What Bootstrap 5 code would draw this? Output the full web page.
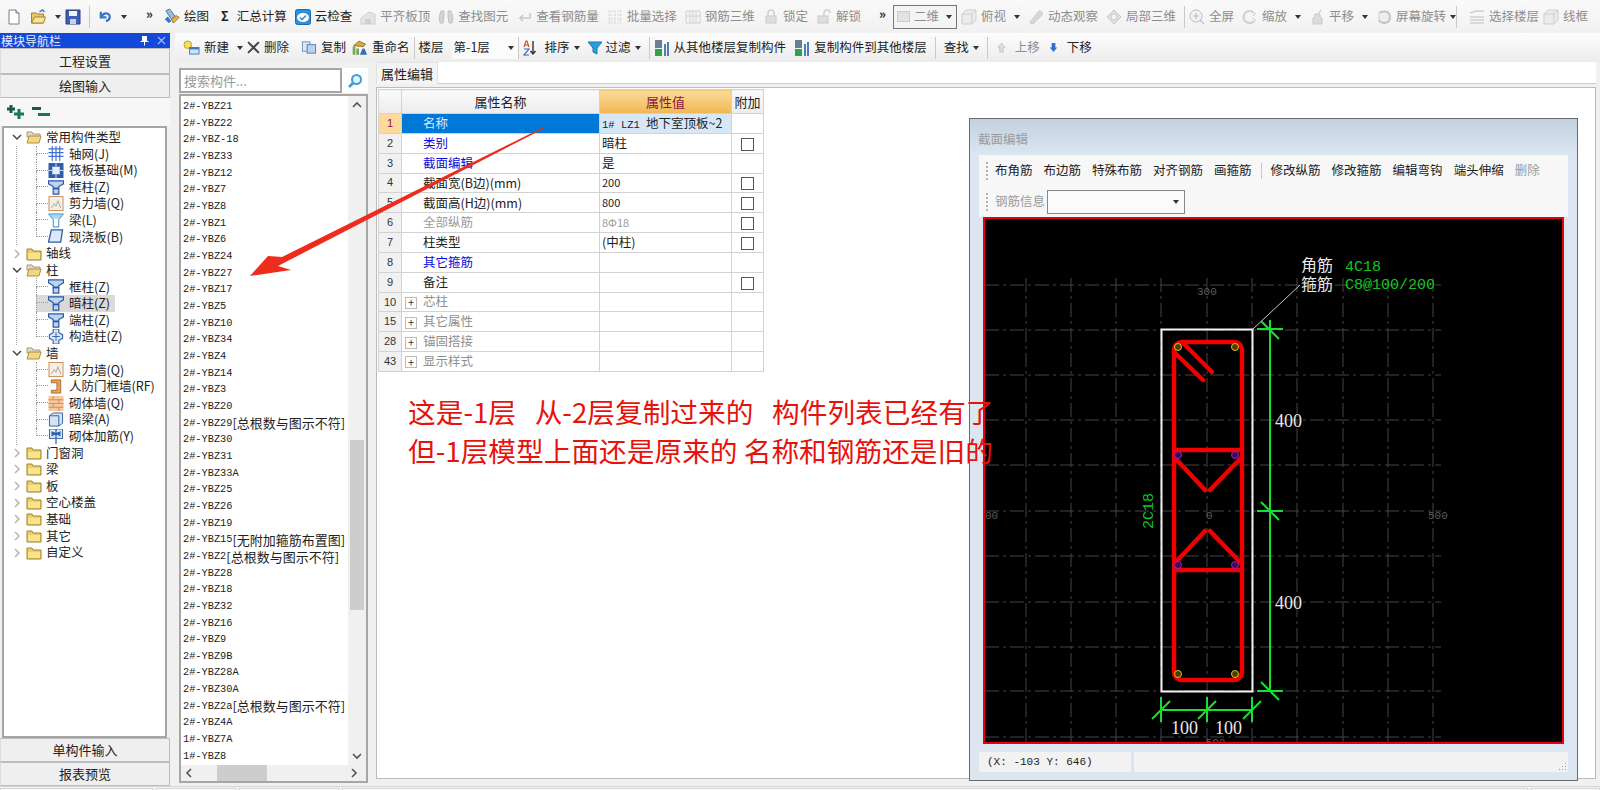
<!DOCTYPE html>
<html lang="zh-CN">
<head>
  <meta charset="UTF-8">
  <title>钢筋算量</title>
  <link href="https://cdn.jsdelivr.net/npm/bootstrap@5.3.3/dist/css/bootstrap.min.css" rel="stylesheet">
  <style>
    html, body { height: 790px; overflow: hidden; }
    body {
      width: 1600px;
      background: #f0f0f0;
      color: #222;
      font-family: "Noto Sans CJK SC", "Liberation Sans", sans-serif;
      font-size: 12.5px;
      line-height: 1;
      position: relative;
    }
    svg { flex: none; display: block; }
    .mono { font-family: "Liberation Mono", "Noto Sans CJK SC", monospace; }

    /* toolbars */
    .top-bar { height: 33px; padding-left: 6px; background: linear-gradient(#fafafa, #f1f1f1); white-space: nowrap; }
    .tool { display: inline-flex; align-items: center; gap: 4px; margin-right: 8px; }
    .tool.off { color: #8d8d8d; }
    .caret-down { width: 0; height: 0; border: 3px solid transparent; border-top: 4px solid #333; border-bottom: 0; flex: none; }
    .tool-sep { width: 1px; height: 22px; background: #c9c9c9; flex: none; }
    .more { font-size: 13px; font-weight: 700; width: 17px; margin-left: 11px; margin-top: -6px; }
    .more-b { width: 14px; margin-left: 10px; }
    .view-box { width: 64px; height: 24px; border: 1px solid #777; background: #f4f4f4; color: #8d8d8d; gap: 4px; padding-left: 3px; }
    .view-glyph { width: 13px; height: 11px; background: #e2e2e2; border: 1px solid #ccc; }
    .sub-bar { height: 29px; margin-left: 5px; padding-left: 8px; background: linear-gradient(#fdfdfd, #ececec); white-space: nowrap; }
    .floor-select { width: 66px; height: 22px; background: #fbfbfb; padding: 0 4px 0 2px; }

    /* left navigation */
    .nav-col { width: 170px; flex: none; }
    .nav-head { height: 15px; background: #1249d8; color: #e8eeff; font-size: 12px; padding: 0 4px 0 1px; }
    .pane-btn { background: #efefef; border: 1px solid #bdbdbd; border-left-color: #ddd; text-align: center; font-size: 13px; }
    .pane-btn.h-a { height: 26px; line-height: 24px; }
    .pane-btn.h-b { height: 24px; line-height: 22px; }
    .pane-btn.h-c { height: 24px; line-height: 22px; }
    .tree-tools { height: 28px; background: #f7f7f7; padding-left: 7px; gap: 7px; }
    .tree-box { height: 612px; margin: 0 3px 0 2px; background: #fff; border: 2px solid #a6a6a6; padding-top: 1px; overflow: hidden; }
    .tree-row { height: 16.62px; display: flex; align-items: center; font-size: 12.5px; white-space: nowrap; }
    .tree-top { gap: 4px; padding-left: 8px; }
    .tree-sub { margin-left: 12px; border-left: 1px dotted #aaa; padding-left: 19px; }
    .tree-kid { position: relative; padding-left: 12px; gap: 5px; }
    .tree-kid::before { content: ""; position: absolute; left: 0; top: 0; height: 50%; width: 12px; border-left: 1px dotted #999; border-bottom: 1px dotted #999; }
    .tree-kid:not(:last-child)::after { content: ""; position: absolute; left: 0; top: 50%; bottom: 0; border-left: 1px dotted #999; }
    .tree-sel { background: #dadada; margin-right: 50px; }

    /* component list */
    .right-col { min-width: 0; }
    .main-row { height: 721px; }
    .list-col { width: 198px; flex: none; padding: 6px 0 0 9px; }
    .search-line { height: 26px; }
    .search-input { width: 163px; height: 25px; border: 2px solid #a6a6a6; border-radius: 0; padding: 0 3px; font-size: 13px; color: #999; background: #fff; display: flex; align-items: center; }
    .search-go { flex: 1; background: #fff; height: 25px; }
    .list-box { height: 689px; width: 189px; border: 2px solid #a6a6a6; background: #fff; }
    .list-rows { height: 669px; padding-top: 2px; width: 167px; }
    .list-item { height: 16.67px; display: flex; align-items: center; padding-left: 2px; font-size: 10.3px; white-space: nowrap; color: #222; }
    .list-item b { font-weight: 400; font-size: 13px; font-family: "Noto Sans CJK SC", sans-serif; }
    .vbar { width: 18px; background: #f0f0f0; }
    .vbar-arrow { height: 18px; }
    .vbar-up { height: 326px; }
    .vbar-thumb { height: 170px; background: #cdcdcd; margin: 0 2px; }
    .hbar { height: 16px; background: #f0f0f0; padding: 0 4px; }
    .hbar-left { width: 24px; }
    .hbar-thumb { width: 50px; height: 16px; background: #cdcdcd; }

    /* properties */
    .prop-col { min-width: 0; margin-left: 8px; margin-right: 4px; }
    .tab-line { height: 22px; background: #fff; border-bottom: 1px solid #cfcfcf; }
    .prop-tab { width: 62px; height: 22px; background: #f4f4f4; font-size: 13px; text-align: center; line-height: 21px; border: 1px solid #e2e2e2; border-bottom: 0; }
    .prop-gap { height: 3px; }
    .prop-panel { height: 692px; background: #fff; border: 1px solid #bcbcbc; padding: 1px; }
    .prop-table { width: 385px; table-layout: fixed; margin: 0; --bs-table-border-color: #d2d2d2; }
    .c-no { width: 23px; } .c-name { width: 198px; } .c-val { width: 132px; } .c-add { width: 32px; }
    .prop-table th, .prop-table td { padding: 0; height: 19.85px; vertical-align: middle; font-weight: 400; background: #fff; color: #222; box-shadow: none; white-space: nowrap; overflow: hidden; }
    .prop-table thead th { height: 24px; text-align: center; font-size: 13px; background: linear-gradient(#fafafa, #ececec); }
    .prop-table thead th.val-head { background: linear-gradient(#fbdc9c, #f1b653); color: #8a1538; }
    .prop-table .no-cell { text-align: center; background: #f1f1f1; font-size: 11px; color: #333; font-family: "Liberation Sans", sans-serif; }
    .prop-table .no-cell.on { background: #fdd99b; color: #8a1538; }
    .prop-table .name-cell { padding-left: 21px; font-size: 12.5px; }
    .prop-table .name-cell.on { background: #0078d7; color: #d8ecff; }
    .prop-table .name-cell.link { color: #0a0ae0; }
    .prop-table .name-cell.dim, .prop-table .val-cell.dim { color: #9a9a9a; }
    .prop-table .group-cell { padding-left: 3px; color: #8f8f8f; }
    .prop-table .val-cell { padding-left: 2px; font-size: 12.5px; }
    .prop-table .val-cell.on { background: #d6e8f8; }
    .prop-table .chk-cell { text-align: center; }
    .val-latin { font-size: 10.5px; white-space: pre; }
    .prop-table .val-num { font-size: 11px; }
    .prop-check { width: 13px; height: 13px; margin: 2px 0 0 0; border: 1px solid #555; border-radius: 0 !important; }
    .plus-box { width: 12px; height: 12px; border: 1px solid #bbb; display: inline-flex; align-items: center; justify-content: center; color: #333; font-size: 11px; margin-right: 6px; vertical-align: middle; }

    /* things lying on top of the panel */
    .note-text { position: absolute; left: 408px; top: 392px; color: #e8120c; font-size: 27.7px; line-height: 39px; white-space: pre; }
    .arrow-layer { position: absolute; left: 0; top: 0; pointer-events: none; }

    /* section editor window */
    .section-win { position: absolute; left: 969px; top: 118px; width: 609px; height: 663px; background: #dbe6f1; border: 1px solid #6b6b6b; padding: 0 9px; }
    .win-title { height: 36px; margin: 0 -9px; padding: 5px 0 0 8px; color: #9a9a9a; font-size: 12.5px; background: linear-gradient(#c2d1df, #dbe6f1); display: flex; align-items: center; }
    .win-tools { background: #f7f7f7; height: 62px; padding: 0 4px; }
    .win-row { height: 31px; gap: 11px; padding-left: 12px; position: relative; }
    .win-row::before { content: ""; position: absolute; left: 3px; top: 7px; bottom: 6px; border-left: 2px dotted #b4b4b4; }
    .win-combo { width: 138px; height: 24px; border: 1px solid #888; background: #fbfbfb; margin-left: -9px; padding-right: 5px; }
    .win-row .off { color: #9a9a9a; }
    .win-sep { width: 1px; height: 16px; background: #c9c9c9; margin: 0 -2px; }
    .win-canvas { margin: 0 4px; border: 2px solid #e8000a; background: #000; height: 527px; overflow: hidden; }
    .win-status { height: 22px; margin-top: 8px; gap: 3px; }
    .status-cell { background: #f2f2f2; height: 20px; display: flex; align-items: center; padding-left: 8px; font-size: 11px; }
    .status-a { width: 152px; }
    .status-b { flex: 1; }
    .grip { margin-left: auto; margin-right: 1px; align-self: flex-end; }

    .bottom-strip { height: 7px; gap: 3px; border-top: 1px solid #d5d5d5; padding-top: 1px; }
    .bottom-strip span { background: #f9f9f9; border: 1px solid #d8d8d8; border-bottom: 0; }
    .tab-a { width: 153px; } .tab-b { width: 80px; } .tab-c { width: 100px; } .tab-d { width: 1186px; } .tab-e { flex: 1; }

    .cad-mono { font-family: "Liberation Mono", monospace; }
    .cad-serif { font-family: "Liberation Serif", serif; }
  </style>
</head>
<body>

<svg width="0" height="0" class="position-absolute">
  <defs>
    <symbol id="i-doc" viewBox="0 0 16 16"><path d="M3 1h7l3 3v11H3z" fill="#fff" stroke="#6d7f95"/><path d="M10 1v3h3" fill="#dfe6ee" stroke="#6d7f95"/></symbol>
    <symbol id="i-open" viewBox="0 0 16 16"><path d="M1 4h5l1 1h6v9H1z" fill="#e8c66a" stroke="#a5822c"/><path d="M1 14l3-6h11l-2 6z" fill="#f8e39a" stroke="#a5822c"/><path d="M9 3l3-2 2 2" fill="none" stroke="#3a78c4" stroke-width="1.4"/></symbol>
    <symbol id="i-save" viewBox="0 0 16 16"><path d="M1 1h14v14H1z" fill="#3d5fb5" stroke="#283f80"/><path d="M4 2h8v5H4z" fill="#f3f3f3"/><path d="M5 10h6v5H5z" fill="#c9d3e6"/></symbol>
    <symbol id="i-undo" viewBox="0 0 16 16"><path d="M3 3v6h6" fill="none" stroke="#3a78c4" stroke-width="2.4"/><path d="M3.5 8.5C6 3 13 3.5 12.500 9c-.2 2-2 3.500-4 4" fill="none" stroke="#3a78c4" stroke-width="2.4"/></symbol>
    <symbol id="i-draw" viewBox="0 0 18 18"><path d="M3 3l4-2 6 8-4 3z" fill="#9db9dd" stroke="#50739f"/><path d="M9 12l5-4 3 2-6 6z" fill="#e9b04f" stroke="#9c6f1e"/><path d="M2 12l3-3 4 5-3 2z" fill="#3c74c4"/></symbol>
    <symbol id="i-cloud" viewBox="0 0 16 16"><rect x=".5" y=".5" width="15" height="15" rx="2" fill="#2f8fd8" stroke="#1a6cad"/><ellipse cx="8" cy="8.5" rx="6" ry="4.5" fill="#fff"/><path d="M5 8.5l2 2 4-4" fill="none" stroke="#2f8fd8" stroke-width="1.6"/></symbol>
    <symbol id="i-g-roof" viewBox="0 0 16 16"><path d="M1 15V9l8-6 6 2v10z" fill="#e4e4e4" stroke="#cfcfcf"/><path d="M5 10h6v5H5z" fill="#d0d0d0"/></symbol>
    <symbol id="i-g-find" viewBox="0 0 16 16"><path d="M1 8l2-6h3v5l-1 7H2zM15 8l-2-6h-3v5l1 7h3z" fill="#d4d4d4" stroke="#c4c4c4"/></symbol>
    <symbol id="i-g-back" viewBox="0 0 16 16"><path d="M14 4v5H5M7 6L4 9l3 3" fill="none" stroke="#c9c9c9" stroke-width="1.6"/></symbol>
    <symbol id="i-g-batch" viewBox="0 0 16 16"><path d="M1 2h14M1 6h14M1 10h14M1 14h14M3 2v12M8 2v12M13 2v12" stroke="#d8d8d8" fill="none" stroke-dasharray="2 1"/></symbol>
    <symbol id="i-g-rebar" viewBox="0 0 16 16"><path d="M1 2h14v12H1zM5 2v12M8 2v12M11 2v12M1 7h14" fill="none" stroke="#d0d0d0"/></symbol>
    <symbol id="i-g-lock" viewBox="0 0 16 16"><path d="M5 7V4a3 3 0 016 0v3" fill="none" stroke="#cfcfcf" stroke-width="1.4"/><rect x="3" y="7" width="10" height="7" fill="#dedede" stroke="#cacaca"/></symbol>
    <symbol id="i-g-unlock" viewBox="0 0 16 16"><path d="M8 7V4a3 3 0 016 0" fill="none" stroke="#cfcfcf" stroke-width="1.4"/><rect x="2" y="7" width="10" height="7" fill="#dedede" stroke="#cacaca"/></symbol>
    <symbol id="i-g-cube" viewBox="0 0 16 16"><path d="M1 5l4-4h10v10l-4 4H1zM1 5h10v10M11 5l4-4" fill="#ececec" stroke="#cdcdcd"/></symbol>
    <symbol id="i-g-orbit" viewBox="0 0 16 16"><path d="M2 13L11 2c3 0 4 2 3 4L5 15c-2 0-3-1-3-2z" fill="#d8d8d8" stroke="#cacaca"/></symbol>
    <symbol id="i-g-part" viewBox="0 0 16 16"><path d="M8 1l7 7-7 7-7-7z" fill="#e0e0e0" stroke="#c8c8c8"/><circle cx="8" cy="8" r="3" fill="#f4f4f4" stroke="#c8c8c8"/></symbol>
    <symbol id="i-g-full" viewBox="0 0 16 16"><circle cx="7" cy="7" r="6" fill="#f2f2f2" stroke="#bdbdbd"/><path d="M4 7h6M7 4v6M11 11l4 4" stroke="#bdbdbd" fill="none" stroke-width="1.2"/></symbol>
    <symbol id="i-g-zoom" viewBox="0 0 16 16"><path d="M12 4a6 6 0 100 8" fill="none" stroke="#cfcfcf" stroke-width="2"/><path d="M11 7l3-3M11 9l3 3" stroke="#c4c4c4"/></symbol>
    <symbol id="i-g-pan" viewBox="0 0 16 16"><path d="M4 15V9l2-1V5h5v3l2 1v6z" fill="#dcdcdc" stroke="#c9c9c9"/><path d="M10 4l2-3" stroke="#bbb"/></symbol>
    <symbol id="i-g-rot" viewBox="0 0 16 16"><path d="M3 3h10v10H3z" fill="#eee" stroke="#d0d0d0"/><path d="M3 11a6 6 0 1 0 1-7" fill="none" stroke="#bdbdbd" stroke-width="1.4"/></symbol>
    <symbol id="i-g-floors" viewBox="0 0 16 16"><path d="M1 4l6-2h8M1 8h14M1 11h14M1 14h14" stroke="#cfcfcf" fill="none" stroke-width="1.6"/></symbol>
    <symbol id="i-new" viewBox="0 0 18 16"><circle cx="5" cy="5" r="4" fill="#f4df64" stroke="#b89a1e"/><rect x="7" y="8" width="10" height="7" fill="#cfe1f4" stroke="#3e79c0"/><rect x="7" y="8" width="10" height="2" fill="#3e79c0"/></symbol>
    <symbol id="i-x" viewBox="0 0 12 12"><path d="M1 1l10 10M11 1L1 11" stroke="#444" stroke-width="1.8"/></symbol>
    <symbol id="i-copy" viewBox="0 0 16 16"><rect x="1" y="2" width="8" height="10" fill="#dbe7f5" stroke="#6f93bd"/><rect x="6" y="5" width="9" height="9" fill="#bdd3ec" stroke="#4f7fb5"/></symbol>
    <symbol id="i-rename" viewBox="0 0 20 18"><path d="M4 7l6-5 7 3-2 3z" fill="#d9a93e" stroke="#8f6c1c"/><path d="M3 8h3v9H3zM7 10h3v7H7z" fill="#77a65a"/><path d="M11 17l3-7h2l3 7z" fill="#3a69b5"/></symbol>
    <symbol id="i-sort" viewBox="0 0 14 16"><path d="M1 7l2-6h1l2 6M2 5h3" fill="none" stroke="#d0491f" stroke-width="1.1"/><path d="M1 9h5L1 15h5" fill="none" stroke="#2e62b5" stroke-width="1.1"/><path d="M10 1v13M7.500 11l2.500 3 2.500-3" fill="none" stroke="#333" stroke-width="1.4"/></symbol>
    <symbol id="i-filter" viewBox="0 0 14 14"><path d="M0 1h14L9 7v6l-4-2V7z" fill="#2b9ce0" stroke="#1a79b5"/></symbol>
    <symbol id="i-copy-in" viewBox="0 0 16 18"><rect x="1" y="1" width="7" height="8" fill="#6b7e96"/><rect x="1" y="10" width="7" height="7" fill="#33a14a"/><path d="M10 5h2v12h-2zM13 3h2v14h-2z" fill="#4f7fb5"/></symbol>
    <symbol id="i-up" viewBox="0 0 12 12"><path d="M6 1l4 5H8v5H4V6H2z" fill="#dcdcdc" stroke="#c9c9c9"/></symbol>
    <symbol id="i-down" viewBox="0 0 12 12"><path d="M6 11l4-5H8V1H4v5H2z" fill="#2e6fcf"/></symbol>
    <symbol id="i-plus2" viewBox="0 0 18 14"><path d="M2.500 0h3v2.500H8v3H5.500V8h-3V5.500H0v-3h2.500z" fill="#1d5c3e"/><path d="M10.500 4h3v3.500H17v3h-3.500V14h-3v-3.500H7v-3h3.500z" fill="#157a50"/></symbol>
    <symbol id="i-minus2" viewBox="0 0 18 14"><path d="M0 2h9v3H0z" fill="#1d5c3e"/><path d="M6 8h12v3H6z" fill="#157a50"/></symbol>
    <symbol id="i-search" viewBox="0 0 16 16"><circle cx="9.500" cy="6.500" r="4.500" fill="#e6f4fd" stroke="#3c9ddb" stroke-width="2"/><path d="M6 10l-4 4" stroke="#3c9ddb" stroke-width="2.600"/></symbol>
    <symbol id="i-folder" viewBox="0 0 16 14"><path d="M1 2h5l1 2h8v9H1z" fill="#f0cf62" stroke="#9c8230"/><path d="M2 6h12v6H2z" fill="#f8e38e"/></symbol>
    <symbol id="i-folder-open" viewBox="0 0 16 14"><path d="M1 2h5l1 2h7v3H1z" fill="#e2dcc7" stroke="#a39b7e"/><path d="M1 13l2-7h12l-2 7z" fill="#f4d682" stroke="#a89048"/></symbol>
    <symbol id="i-chev-d" viewBox="0 0 10 10"><path d="M1 3l4 4 4-4" fill="none" stroke="#444" stroke-width="1.500"/></symbol>
    <symbol id="i-chev-r" viewBox="0 0 10 10"><path d="M3 1l4 4-4 4" fill="none" stroke="#b5b5b5" stroke-width="1.500"/></symbol>
    <symbol id="t-grid" viewBox="0 0 16 16"><path d="M0 3h16M0 7h16M0 11h16M4 0v16M8 0v16M12 0v16" stroke="#3f6fd0" fill="none" stroke-width="1.200"/></symbol>
    <symbol id="t-raft" viewBox="0 0 16 16"><rect x="0" y="0" width="16" height="16" fill="#2f5fa8"/><rect x="4" y="4" width="8" height="8" fill="#e5eefb"/><path d="M0 8h4M12 8h4M8 0v4M8 12v4" stroke="#cfe0f7"/></symbol>
    <symbol id="t-col" viewBox="0 0 16 16"><path d="M0 1h16v3L11 7v8H5V7L0 4z" fill="#bcd4f0" stroke="#2a58a8" stroke-width="1.300"/><path d="M5 8h6v2H5z" fill="#2a58a8"/></symbol>
    <symbol id="t-wall" viewBox="0 0 16 16"><rect x=".5" y=".5" width="15" height="15" fill="#f5efe6" stroke="#c98d58"/><path d="M3 13l3-5 2 3 2-6 3 8" stroke="#a9a9a9" fill="none"/></symbol>
    <symbol id="t-beam" viewBox="0 0 16 16"><path d="M0 1h16L11 7v8H5V7z" fill="#a9d4f2" stroke="#4d93cc"/><path d="M6 6h4v8H6z" fill="#fff"/></symbol>
    <symbol id="t-slab" viewBox="0 0 16 16"><path d="M3 1h12l-2 13H0z" fill="#dbe8f8" stroke="#2f5fa8" stroke-width="1.400"/></symbol>
    <symbol id="t-star" viewBox="0 0 16 16"><path d="M5 0h6v4l4 2v4l-4 2v4H5v-4l-4-2V6l4-2z" fill="#dbe8f8" stroke="#2f5fa8" stroke-width="1.200"/><path d="M8 3v10M4 8h8" stroke="#2f5fa8"/></symbol>
    <symbol id="t-door" viewBox="0 0 16 16"><path d="M3 1h10v14H3V12h6V4H3z" fill="#e9a45f" stroke="#a96628"/></symbol>
    <symbol id="t-brick" viewBox="0 0 16 16"><rect width="16" height="16" fill="#f4c8a0"/><path d="M0 4h16M0 8h16M0 12h16M5 0v4M11 4v4M5 8v4M11 12v4" stroke="#d98a4d"/></symbol>
    <symbol id="t-box" viewBox="0 0 16 16"><path d="M1 4l4-3h10v11l-4 3H1z" fill="#d4e3f5" stroke="#2f5fa8"/><path d="M1 4h10v11" fill="none" stroke="#2f5fa8"/></symbol>
    <symbol id="t-bar" viewBox="0 0 16 16"><rect x="1" y="0" width="14" height="10" fill="#dce9f8" stroke="#2f5fa8"/><path d="M8 0v16M3 5h10M3 3l10 4M13 3L3 7" stroke="#2f5fa8" stroke-width="1.300"/></symbol>
  </defs>
</svg>

<div class="top-bar d-flex align-items-center">
  <span class="tool"><svg width="16" height="16"><use href="#i-doc"/></svg></span>
  <span class="tool me-1"><svg width="17" height="16"><use href="#i-open"/></svg><i class="caret-down ms-1"></i></span>
  <span class="tool"><svg width="16" height="16"><use href="#i-save"/></svg></span>
  <i class="tool-sep me-2"></i>
  <span class="tool"><svg width="15" height="15"><use href="#i-undo"/></svg><i class="caret-down ms-1"></i></span>
  <span class="more">»</span>
  <span class="tool"><svg width="17" height="17"><use href="#i-draw"/></svg>绘图</span>
  <span class="tool ms-1"><b>Σ</b><span class="ms-1">汇总计算</span></span>
  <span class="tool"><svg width="16" height="16"><use href="#i-cloud"/></svg>云检查</span>
  <span class="tool off"><svg width="16" height="16"><use href="#i-g-roof"/></svg>平齐板顶</span>
  <span class="tool off"><svg width="16" height="16"><use href="#i-g-find"/></svg>查找图元</span>
  <span class="tool off"><svg width="16" height="16"><use href="#i-g-back"/></svg>查看钢筋量</span>
  <span class="tool off"><svg width="16" height="16"><use href="#i-g-batch"/></svg>批量选择</span>
  <span class="tool off"><svg width="16" height="16"><use href="#i-g-rebar"/></svg>钢筋三维</span>
  <span class="tool off"><svg width="16" height="16"><use href="#i-g-lock"/></svg>锁定</span>
  <span class="tool off"><svg width="16" height="16"><use href="#i-g-unlock"/></svg>解锁</span>
  <span class="more more-b">»</span>
  <span class="view-box d-flex align-items-center me-1"><i class="view-glyph"></i>二维<i class="caret-down ms-auto me-1"></i></span>
  <span class="tool off"><svg width="16" height="16"><use href="#i-g-cube"/></svg>俯视<i class="caret-down ms-1"></i></span>
  <span class="tool off"><svg width="16" height="16"><use href="#i-g-orbit"/></svg>动态观察</span>
  <span class="tool off"><svg width="16" height="16"><use href="#i-g-part"/></svg>局部三维</span>
  <i class="tool-sep"></i>
  <span class="tool off ms-1"><svg width="16" height="16"><use href="#i-g-full"/></svg>全屏</span>
  <span class="tool off"><svg width="16" height="16"><use href="#i-g-zoom"/></svg>缩放<i class="caret-down ms-1"></i></span>
  <span class="tool off"><svg width="16" height="16"><use href="#i-g-pan"/></svg>平移<i class="caret-down ms-1"></i></span>
  <span class="tool off me-0"><svg width="16" height="16"><use href="#i-g-rot"/></svg>屏幕旋转<i class="caret-down"></i></span>
  <i class="tool-sep me-2"></i>
  <span class="tool off ms-1 me-1"><svg width="16" height="16"><use href="#i-g-floors"/></svg>选择楼层</span>
  <span class="tool off me-0"><svg width="16" height="16"><use href="#i-g-cube"/></svg>线框</span>
</div>

<div class="d-flex">
  <div class="nav-col">
    <div class="nav-head d-flex align-items-center justify-content-between">
      <span>模块导航栏</span>
      <span class="d-flex align-items-center gap-2">
        <svg width="9" height="11" viewBox="0 0 9 11"><path d="M2 1h5v5h1.500v1H5v3.500H4V7H.5V6H2z" fill="#fff"/></svg>
        <svg width="9" height="9" viewBox="0 0 9 9"><path d="M1 1l7 7M8 1L1 8" stroke="#9fb6f0" stroke-width="1.200"/></svg>
      </span>
    </div>
    <div class="pane-btn h-a">工程设置</div>
    <div class="pane-btn h-b">绘图输入</div>
    <div class="tree-tools d-flex align-items-center">
      <svg width="18" height="14"><use href="#i-plus2"/></svg>
      <svg width="18" height="14"><use href="#i-minus2"/></svg>
    </div>
    <div class="tree-box">
      <div class="tree-row tree-top"><svg width="10" height="10"><use href="#i-chev-d"/></svg><svg width="16" height="14"><use href="#i-folder-open"/></svg><span>常用构件类型</span></div>
      <div class="tree-sub">
        <div class="tree-row tree-kid"><svg width="16" height="15"><use href="#t-grid"/></svg>轴网(J)</div>
        <div class="tree-row tree-kid"><svg width="16" height="15"><use href="#t-raft"/></svg>筏板基础(M)</div>
        <div class="tree-row tree-kid"><svg width="16" height="15"><use href="#t-col"/></svg>框柱(Z)</div>
        <div class="tree-row tree-kid"><svg width="16" height="15"><use href="#t-wall"/></svg>剪力墙(Q)</div>
        <div class="tree-row tree-kid"><svg width="16" height="15"><use href="#t-beam"/></svg>梁(L)</div>
        <div class="tree-row tree-kid"><svg width="16" height="15"><use href="#t-slab"/></svg>现浇板(B)</div>
      </div>
      <div class="tree-row tree-top"><svg width="10" height="10"><use href="#i-chev-r"/></svg><svg width="16" height="14"><use href="#i-folder"/></svg><span>轴线</span></div>
      <div class="tree-row tree-top"><svg width="10" height="10"><use href="#i-chev-d"/></svg><svg width="16" height="14"><use href="#i-folder-open"/></svg><span>柱</span></div>
      <div class="tree-sub">
        <div class="tree-row tree-kid"><svg width="16" height="15"><use href="#t-col"/></svg>框柱(Z)</div>
        <div class="tree-row tree-kid tree-sel"><svg width="16" height="15"><use href="#t-col"/></svg>暗柱(Z)</div>
        <div class="tree-row tree-kid"><svg width="16" height="15"><use href="#t-col"/></svg>端柱(Z)</div>
        <div class="tree-row tree-kid"><svg width="16" height="15"><use href="#t-star"/></svg>构造柱(Z)</div>
      </div>
      <div class="tree-row tree-top"><svg width="10" height="10"><use href="#i-chev-d"/></svg><svg width="16" height="14"><use href="#i-folder-open"/></svg><span>墙</span></div>
      <div class="tree-sub">
        <div class="tree-row tree-kid"><svg width="16" height="15"><use href="#t-wall"/></svg>剪力墙(Q)</div>
        <div class="tree-row tree-kid"><svg width="16" height="15"><use href="#t-door"/></svg>人防门框墙(RF)</div>
        <div class="tree-row tree-kid"><svg width="16" height="15"><use href="#t-brick"/></svg>砌体墙(Q)</div>
        <div class="tree-row tree-kid"><svg width="16" height="15"><use href="#t-box"/></svg>暗梁(A)</div>
        <div class="tree-row tree-kid"><svg width="16" height="15"><use href="#t-bar"/></svg>砌体加筋(Y)</div>
      </div>
      <div class="tree-row tree-top"><svg width="10" height="10"><use href="#i-chev-r"/></svg><svg width="16" height="14"><use href="#i-folder"/></svg><span>门窗洞</span></div>
      <div class="tree-row tree-top"><svg width="10" height="10"><use href="#i-chev-r"/></svg><svg width="16" height="14"><use href="#i-folder"/></svg><span>梁</span></div>
      <div class="tree-row tree-top"><svg width="10" height="10"><use href="#i-chev-r"/></svg><svg width="16" height="14"><use href="#i-folder"/></svg><span>板</span></div>
      <div class="tree-row tree-top"><svg width="10" height="10"><use href="#i-chev-r"/></svg><svg width="16" height="14"><use href="#i-folder"/></svg><span>空心楼盖</span></div>
      <div class="tree-row tree-top"><svg width="10" height="10"><use href="#i-chev-r"/></svg><svg width="16" height="14"><use href="#i-folder"/></svg><span>基础</span></div>
      <div class="tree-row tree-top"><svg width="10" height="10"><use href="#i-chev-r"/></svg><svg width="16" height="14"><use href="#i-folder"/></svg><span>其它</span></div>
      <div class="tree-row tree-top"><svg width="10" height="10"><use href="#i-chev-r"/></svg><svg width="16" height="14"><use href="#i-folder"/></svg><span>自定义</span></div>
    </div>
    <div class="pane-btn h-c">单构件输入</div>
    <div class="pane-btn h-c">报表预览</div>
  </div>

  <div class="flex-grow-1 right-col">
    <div class="sub-bar d-flex align-items-center">
      <span class="tool me-1"><svg width="17" height="15"><use href="#i-new"/></svg>新建<i class="caret-down ms-1"></i></span>
      <span class="tool"><svg width="13" height="13"><use href="#i-x"/></svg><span>删除</span></span>
      <span class="tool ms-1 me-1"><svg width="16" height="15"><use href="#i-copy"/></svg>复制</span>
      <span class="tool me-1"><svg width="18" height="17"><use href="#i-rename"/></svg>重命名</span>
      <i class="tool-sep me-1"></i>
      <span>楼层</span>
      <span class="floor-select d-flex align-items-center justify-content-between ms-2"><span>第-1层</span><i class="caret-down"></i></span>
      <i class="tool-sep me-1"></i>
      <span class="tool"><svg width="14" height="16"><use href="#i-sort"/></svg><span class="ms-1">排序</span><i class="caret-down"></i></span>
      <span class="tool"><svg width="14" height="14"><use href="#i-filter"/></svg>过滤<i class="caret-down"></i></span>
      <i class="tool-sep me-1"></i>
      <span class="tool"><svg width="16" height="18"><use href="#i-copy-in"/></svg>从其他楼层复制构件</span>
      <span class="tool"><svg width="16" height="18"><use href="#i-copy-in"/></svg>复制构件到其他楼层</span>
      <i class="tool-sep me-2"></i>
      <span class="tool">查找<i class="caret-down"></i></span>
      <i class="tool-sep me-2"></i>
      <span class="tool off"><svg width="11" height="11"><use href="#i-up"/></svg><span class="ms-1">上移</span></span>
      <span class="tool"><svg width="11" height="11"><use href="#i-down"/></svg><span class="ms-1">下移</span></span>
    </div>

    <div class="main-row d-flex">
      <div class="list-col">
        <div class="search-line d-flex">
          <div class="search-input">搜索构件...</div>
          <div class="search-go d-flex align-items-center justify-content-center"><svg width="16" height="16"><use href="#i-search"/></svg></div>
        </div>
        <div class="list-box">
          <div class="d-flex">
            <div class="list-rows mono flex-grow-1">
              <div class="list-item">2#-YBZ21</div>
              <div class="list-item">2#-YBZ22</div>
              <div class="list-item">2#-YBZ-18</div>
              <div class="list-item">2#-YBZ33</div>
              <div class="list-item">2#-YBZ12</div>
              <div class="list-item">2#-YBZ7</div>
              <div class="list-item">2#-YBZ8</div>
              <div class="list-item">2#-YBZ1</div>
              <div class="list-item">2#-YBZ6</div>
              <div class="list-item">2#-YBZ24</div>
              <div class="list-item">2#-YBZ27</div>
              <div class="list-item">2#-YBZ17</div>
              <div class="list-item">2#-YBZ5</div>
              <div class="list-item">2#-YBZ10</div>
              <div class="list-item">2#-YBZ34</div>
              <div class="list-item">2#-YBZ4</div>
              <div class="list-item">2#-YBZ14</div>
              <div class="list-item">2#-YBZ3</div>
              <div class="list-item">2#-YBZ20</div>
              <div class="list-item">2#-YBZ29<b>[总根数与图示不符]</b></div>
              <div class="list-item">2#-YBZ30</div>
              <div class="list-item">2#-YBZ31</div>
              <div class="list-item">2#-YBZ33A</div>
              <div class="list-item">2#-YBZ25</div>
              <div class="list-item">2#-YBZ26</div>
              <div class="list-item">2#-YBZ19</div>
              <div class="list-item">2#-YBZ15<b>[无附加箍筋布置图]</b></div>
              <div class="list-item">2#-YBZ2<b>[总根数与图示不符]</b></div>
              <div class="list-item">2#-YBZ28</div>
              <div class="list-item">2#-YBZ18</div>
              <div class="list-item">2#-YBZ32</div>
              <div class="list-item">2#-YBZ16</div>
              <div class="list-item">2#-YBZ9</div>
              <div class="list-item">2#-YBZ9B</div>
              <div class="list-item">2#-YBZ28A</div>
              <div class="list-item">2#-YBZ30A</div>
              <div class="list-item">2#-YBZ2a<b>[总根数与图示不符]</b></div>
              <div class="list-item">2#-YBZ4A</div>
              <div class="list-item">1#-YBZ7A</div>
              <div class="list-item">1#-YBZ8</div>
            </div>
            <div class="vbar d-flex flex-column">
              <div class="vbar-arrow d-flex align-items-center justify-content-center"><svg width="10" height="8" viewBox="0 0 10 8"><path d="M1 6l4-4 4 4" fill="none" stroke="#555" stroke-width="1.600"/></svg></div>
              <div class="vbar-up"></div>
              <div class="vbar-thumb"></div>
              <div class="flex-grow-1"></div>
              <div class="vbar-arrow d-flex align-items-center justify-content-center"><svg width="10" height="8" viewBox="0 0 10 8"><path d="M1 2l4 4 4-4" fill="none" stroke="#555" stroke-width="1.600"/></svg></div>
            </div>
          </div>
          <div class="hbar d-flex align-items-center">
            <svg width="8" height="10" viewBox="0 0 8 10"><path d="M6 1L2 5l4 4" fill="none" stroke="#555" stroke-width="1.600"/></svg>
            <div class="hbar-left"></div>
            <div class="hbar-thumb"></div>
            <svg class="ms-auto me-1" width="8" height="10" viewBox="0 0 8 10"><path d="M2 1l4 4-4 4" fill="none" stroke="#555" stroke-width="1.600"/></svg>
          </div>
        </div>
      </div>

      <div class="prop-col flex-grow-1">
        <div class="tab-line"><div class="prop-tab">属性编辑</div></div>
        <div class="prop-gap"></div>
        <div class="prop-panel">
          <table class="table table-bordered prop-table">
            <colgroup><col class="c-no"><col class="c-name"><col class="c-val"><col class="c-add"></colgroup>
            <thead>
              <tr><th></th><th>属性名称</th><th class="val-head">属性值</th><th>附加</th></tr>
            </thead>
            <tbody>
              <tr><td class="no-cell on">1</td><td class="name-cell on">名称</td><td class="val-cell on"><span class="mono val-latin">1# LZ1 </span>地下室顶板~2</td><td></td></tr>
              <tr><td class="no-cell">2</td><td class="name-cell link">类别</td><td class="val-cell">暗柱</td><td class="chk-cell"><input class="form-check-input prop-check" type="checkbox"></td></tr>
              <tr><td class="no-cell">3</td><td class="name-cell link">截面编辑</td><td class="val-cell">是</td><td></td></tr>
              <tr><td class="no-cell">4</td><td class="name-cell">截面宽(B边)(mm)</td><td class="val-cell val-num">200</td><td class="chk-cell"><input class="form-check-input prop-check" type="checkbox"></td></tr>
              <tr><td class="no-cell">5</td><td class="name-cell">截面高(H边)(mm)</td><td class="val-cell val-num">800</td><td class="chk-cell"><input class="form-check-input prop-check" type="checkbox"></td></tr>
              <tr><td class="no-cell">6</td><td class="name-cell dim">全部纵筋</td><td class="val-cell dim val-num">8Φ18</td><td class="chk-cell"><input class="form-check-input prop-check" type="checkbox"></td></tr>
              <tr><td class="no-cell">7</td><td class="name-cell">柱类型</td><td class="val-cell">(中柱)</td><td class="chk-cell"><input class="form-check-input prop-check" type="checkbox"></td></tr>
              <tr><td class="no-cell">8</td><td class="name-cell link">其它箍筋</td><td class="val-cell"></td><td></td></tr>
              <tr><td class="no-cell">9</td><td class="name-cell">备注</td><td class="val-cell"></td><td class="chk-cell"><input class="form-check-input prop-check" type="checkbox"></td></tr>
              <tr><td class="no-cell">10</td><td class="group-cell"><span class="plus-box">+</span>芯柱</td><td></td><td></td></tr>
              <tr><td class="no-cell">15</td><td class="group-cell"><span class="plus-box">+</span>其它属性</td><td></td><td></td></tr>
              <tr><td class="no-cell">28</td><td class="group-cell"><span class="plus-box">+</span>锚固搭接</td><td></td><td></td></tr>
              <tr><td class="no-cell">43</td><td class="group-cell"><span class="plus-box">+</span>显示样式</td><td></td><td></td></tr>
            </tbody>
          </table>
        </div>
      </div>
    </div>
  </div>
</div>

<div class="bottom-strip d-flex">
  <span class="tab-a"></span><span class="tab-b"></span><span class="tab-c"></span><span class="tab-d"></span><span class="tab-e"></span>
</div>

<div class="section-win">
  <div class="win-title">截面编辑</div>
  <div class="win-tools">
    <div class="win-row d-flex align-items-center">
      <span>布角筋</span><span>布边筋</span><span>特殊布筋</span><span>对齐钢筋</span><span>画箍筋</span><i class="win-sep"></i><span>修改纵筋</span><span>修改箍筋</span><span>编辑弯钩</span><span>端头伸缩</span><span class="off">删除</span>
    </div>
    <div class="win-row d-flex align-items-center">
      <span class="off">钢筋信息</span>
      <span class="win-combo d-flex align-items-center justify-content-end"><i class="caret-down"></i></span>
    </div>
  </div>
  <div class="win-canvas">
    <svg width="577" height="523" viewBox="985 219 577 523">
      <g stroke="#444" stroke-width="1" stroke-dasharray="14 4 3 4" fill="none">
        <path d="M985 285H1441M985 330H1441M985 375H1441M985 420H1441M985 465H1441M985 511H1441M985 556H1441M985 602H1441M985 647H1441M985 691H1441M985 737H1441"/>
        <path d="M1026 278V742M1071 278V742M1116 278V742M1161 278V742M1207 278V742M1252 278V742M1297 278V742M1343 278V742M1388 278V742M1433 278V742"/>
      </g>
      <g class="cad-mono" fill="#5c5c5c" font-size="11">
        <text x="1197" y="295">300</text>
        <text x="985" y="519">00</text>
        <text x="1428" y="519">500</text>
        <text x="1206" y="519">0</text>
        <text x="1199" y="746">-500</text>
      </g>
      <path d="M1253 329L1300 285" stroke="#c8c8c8" stroke-width="1"/>
      <rect x="1161.500" y="329.500" width="91" height="362" fill="none" stroke="#f2f2f2" stroke-width="2"/>
      <g stroke="#f00000" stroke-width="4.500" fill="none" stroke-linecap="round">
        <rect x="1174" y="342" width="68" height="338" rx="8"/>
        <path d="M1174 450H1242M1174 570H1242"/>
        <path d="M1175 353L1203 380M1183 343L1212 372"/>
        <path d="M1175 458L1205 490M1241 458L1210 490M1175 563L1205 531M1241 563L1210 531"/>
      </g>
      <g stroke="#e2c21a" fill="#4a3b00">
        <circle cx="1178" cy="347" r="3.500"/><circle cx="1235" cy="347" r="3.500"/><circle cx="1178" cy="674" r="3.500"/><circle cx="1235" cy="674" r="3.500"/>
      </g>
      <g stroke="#a020c0" fill="#3c0a55">
        <circle cx="1178" cy="455" r="3.500"/><circle cx="1235" cy="455" r="3.500"/><circle cx="1178" cy="565" r="3.500"/><circle cx="1235" cy="565" r="3.500"/>
      </g>
      <g stroke="#16e030" stroke-width="2" fill="none">
        <path d="M1270 320V691M1257 329H1283M1257 511H1283M1257 691H1283M1261 321L1279 339M1261 502L1279 520M1261 682L1279 700"/>
        <path d="M1161 710H1252M1161 697V722M1207 697V722M1252 697V722M1152 719L1170 701M1198 719L1216 701M1243 719L1261 701"/>
      </g>
      <g class="cad-serif" fill="#e8e8e8" font-size="18">
        <text x="1275" y="427">400</text>
        <text x="1275" y="609">400</text>
        <text x="1171" y="734">100</text>
        <text x="1215" y="734">100</text>
      </g>
      <g fill="#e8e8e8" font-size="16" font-family="Noto Sans CJK SC">
        <text x="1301" y="271">角筋</text>
        <text x="1301" y="290">箍筋</text>
      </g>
      <g class="cad-mono" fill="#12c61e" font-size="15">
        <text x="1345" y="271">4C18</text>
        <text x="1345" y="289">C8@100/200</text>
        <text transform="translate(1153 529) rotate(-90)">2C18</text>
      </g>
    </svg>
  </div>
  <div class="win-status d-flex">
    <div class="status-cell status-a mono">(X: -103 Y: 646)</div>
    <div class="status-cell status-b">
      <svg class="grip" width="10" height="10" viewBox="0 0 10 10"><path d="M8 1h1v1H8zM5 4h1v1H5zM8 4h1v1H8zM2 7h1v1H2zM5 7h1v1H5zM8 7h1v1H8z" fill="#9a9a9a"/></svg>
    </div>
  </div>
</div>

<div class="note-text">这是-1层   从-2层复制过来的   构件列表已经有了
但-1层模型上面还是原来的 名称和钢筋还是旧的</div>

<svg class="arrow-layer" width="1600" height="790" viewBox="0 0 1600 790">
  <polygon points="543,127.500 282,257 268,256 250,276 291,270 278,266 543,129" fill="#ee2c1e"/>
</svg>

</body>
</html>
